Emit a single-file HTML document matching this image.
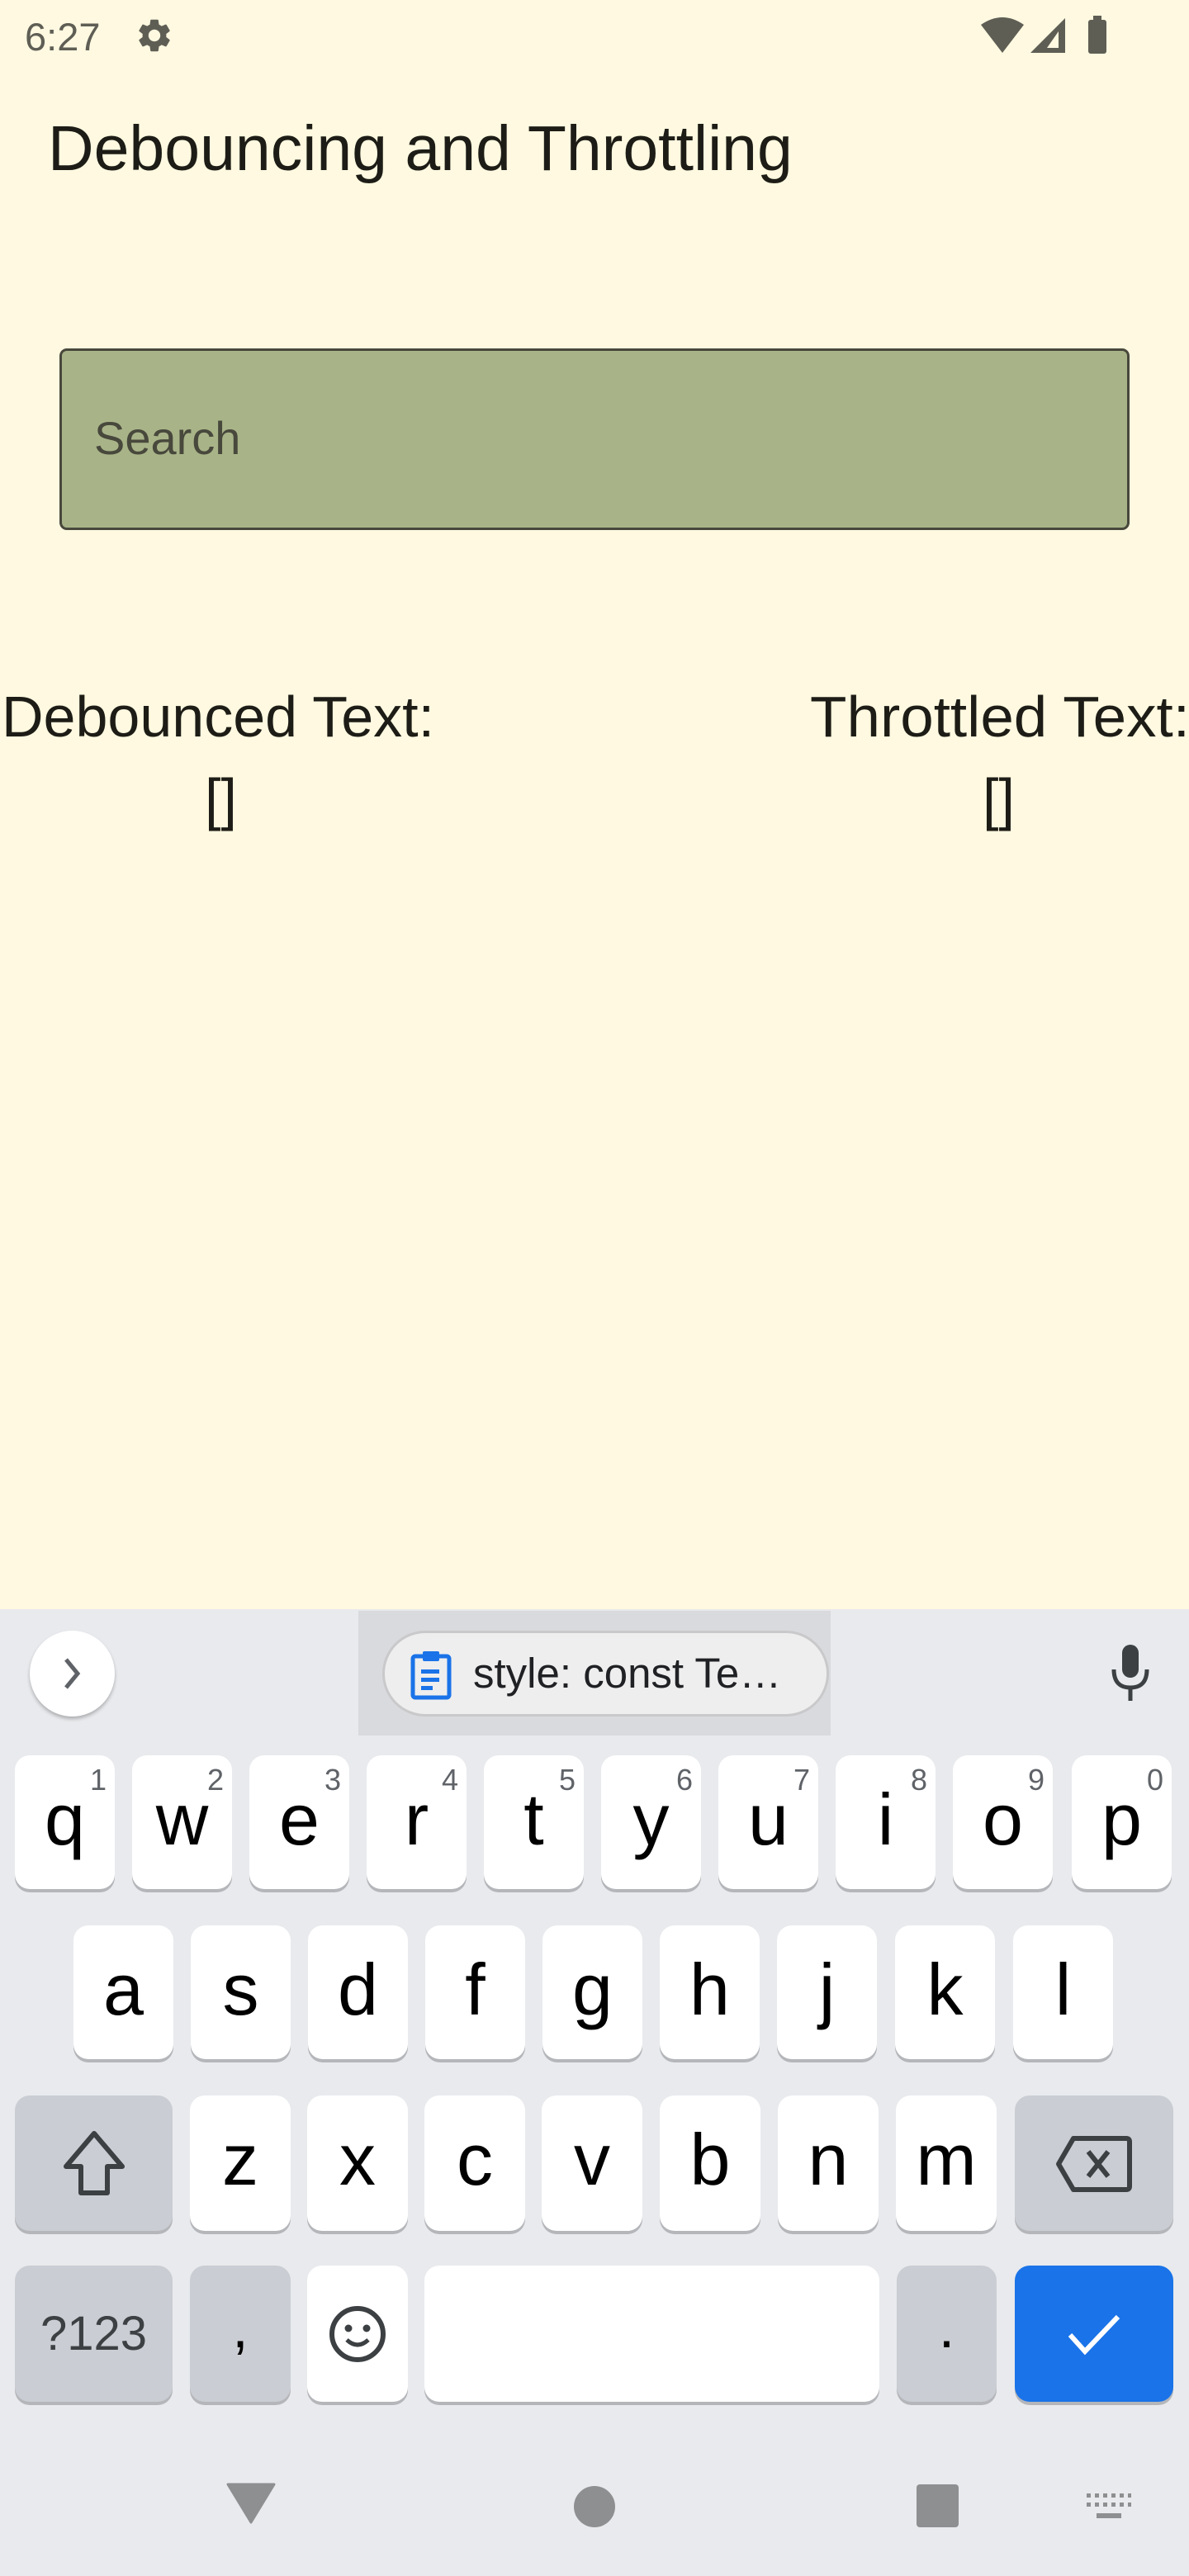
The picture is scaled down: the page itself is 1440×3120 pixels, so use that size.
<!DOCTYPE html>
<html><head><meta charset="utf-8"><style>
*{margin:0;padding:0;box-sizing:border-box}
body{width:1440px;height:3120px;background:#fef9e0;font-family:"Liberation Sans",sans-serif;position:relative;overflow:hidden}
.abs{position:absolute}
.t{white-space:nowrap;transform-origin:0 0}
.kb{position:absolute;left:0;top:1949px;width:1440px;height:1171px;background:#e8eaed}
.key{position:absolute;background:#fff;border-radius:18px;box-shadow:0 4px 0 #b4b6ba;text-align:center;color:#000;font-size:88px;line-height:1}
.key.g{background:#cacdd3}
.key span.l{position:absolute;left:0;right:0;top:34px}
.key span.n{position:absolute;right:10px;top:12px;font-size:36px;color:#5f6368}
</style></head><body>
<!-- status bar -->
<div class="abs t" style="left:30px;top:17px;font-size:47px;color:#5f5e55">6:27</div>
<svg class="abs" style="left:163px;top:19px" width="48" height="48" viewBox="0 0 24 24"><path fill="#5f5e55" d="M19.14 12.94c.04-.3.06-.61.06-.94s-.02-.64-.07-.94l2.030-1.58a.49.49 0 0 0 .12-.61l-1.92-3.32a.488.488 0 0 0-.59-.22l-2.39.96c-.5-.38-1.03-.7-1.62-.94l-.36-2.54a.484.484 0 0 0-.48-.41h-3.84c-.24 0-.43.17-.47.41l-.36 2.54c-.59.24-1.130.57-1.62.94l-2.39-.96c-.22-.08-.47 0-.59.22L2.74 8.87c-.12.21-.08.47.12.61l2.03 1.58c-.05.3-.09.63-.09.94s.02.64.07.94l-2.03 1.58a.49.49 0 0 0-.12.61l1.92 3.32c.12.22.37.29.59.22l2.39-.96c.5.38 1.03.7 1.62.94l.36 2.54c.05.24.24.41.48.41h3.84c.24 0 .44-.17.47-.41l.36-2.54c.59-.24 1.13-.56 1.62-.94l2.39.96c.22.08.47 0 .59-.22l1.92-3.32c.12-.22.07-.47-.12-.61l-2.01-1.58zM12 15.6c-1.98 0-3.6-1.62-3.6-3.6s1.62-3.6 3.6-3.6 3.6 1.62 3.6 3.6-1.62 3.6-3.6 3.6z"/></svg>
<svg class="abs" style="left:1186px;top:20px" width="56" height="46" viewBox="0 0 56 46"><path fill="#5f5e55" d="M2 10 Q28 -8 54 10 L28 44 Z"/></svg>
<svg class="abs" style="left:1246px;top:20px" width="46" height="46" viewBox="0 0 46 46"><path fill="#5f5e55" d="M44 2 V44 H2 Z"/><path fill="#fef9e0" d="M36 18 V38 H22 Z"/></svg>
<div class="abs" style="left:1318px;top:24px;width:22px;height:41px;background:#5f5e55;border-radius:3px"></div>
<div class="abs" style="left:1324px;top:19px;width:10px;height:6px;background:#5f5e55"></div>

<!-- title -->
<div class="abs t" style="left:58px;top:136px;font-size:77px;color:#1d1c16">Debouncing and Throttling</div>

<!-- search field -->
<div class="abs" style="left:72px;top:422px;width:1296px;height:220px;background:#a8b488;border:3px solid #48483c;border-radius:9px"></div>
<div class="abs t" style="left:114px;top:498px;font-size:56px;color:#48483c">Search</div>

<!-- columns -->
<div class="abs t" style="left:2px;top:828px;font-size:70px;color:#1d1c16">Debounced Text:</div>
<div class="abs t" style="left:248px;top:928px;font-size:70px;color:#1d1c16">[]</div>
<div class="abs t" style="left:981px;top:828px;font-size:70px;color:#1d1c16;transform:scaleX(1.04)">Throttled Text:</div>
<div class="abs t" style="left:1190px;top:928px;font-size:70px;color:#1d1c16">[]</div>

<!-- keyboard -->
<div class="kb"></div>
<div class="abs" style="left:434px;top:1951px;width:572px;height:151px;background:#d9dadd"></div>
<div class="abs" style="left:36px;top:1975px;width:103px;height:104px;background:#fff;border-radius:50%;box-shadow:0 3px 4px rgba(0,0,0,.25)"></div>
<svg class="abs" style="left:68px;top:2006px" width="40" height="42" viewBox="0 0 40 42"><path d="M12 4 L26 21 L12 38" fill="none" stroke="#5f6368" stroke-width="5"/></svg>
<div class="abs" style="left:463px;top:1975px;width:541px;height:104px;background:#eeeeee;border:3px solid #c9c9cb;border-radius:52px"></div>
<svg class="abs" style="left:496px;top:1996px" width="54" height="64" viewBox="0 0 54 64"><rect x="4" y="10" width="44" height="50" rx="3" fill="none" stroke="#1a73e8" stroke-width="5"/><rect x="16" y="4" width="20" height="12" rx="2" fill="#1a73e8"/><rect x="14" y="26" width="22" height="5" fill="#1a73e8"/><rect x="14" y="36" width="22" height="5" fill="#1a73e8"/><rect x="14" y="46" width="14" height="5" fill="#1a73e8"/></svg>
<div class="abs t" style="left:573px;top:1997px;font-size:51px;color:#202124">style: const Te…</div>
<svg class="abs" style="left:1342px;top:1990px" width="54" height="72" viewBox="0 0 54 72"><rect x="17" y="2" width="20" height="40" rx="10" fill="#3c4043"/><path d="M7 32 Q7 54 27 54 Q47 54 47 32" fill="none" stroke="#3c4043" stroke-width="5"/><rect x="24.5" y="52" width="5" height="18" fill="#3c4043"/></svg>

<!-- row1 -->
<div class="key" style="left:18px;top:2126px;width:121px;height:162px"><span class="n">1</span><span class="l">q</span></div>
<div class="key" style="left:160px;top:2126px;width:121px;height:162px"><span class="n">2</span><span class="l">w</span></div>
<div class="key" style="left:302px;top:2126px;width:121px;height:162px"><span class="n">3</span><span class="l">e</span></div>
<div class="key" style="left:444px;top:2126px;width:121px;height:162px"><span class="n">4</span><span class="l">r</span></div>
<div class="key" style="left:586px;top:2126px;width:121px;height:162px"><span class="n">5</span><span class="l">t</span></div>
<div class="key" style="left:728px;top:2126px;width:121px;height:162px"><span class="n">6</span><span class="l">y</span></div>
<div class="key" style="left:870px;top:2126px;width:121px;height:162px"><span class="n">7</span><span class="l">u</span></div>
<div class="key" style="left:1012px;top:2126px;width:121px;height:162px"><span class="n">8</span><span class="l">i</span></div>
<div class="key" style="left:1154px;top:2126px;width:121px;height:162px"><span class="n">9</span><span class="l">o</span></div>
<div class="key" style="left:1298px;top:2126px;width:121px;height:162px"><span class="n">0</span><span class="l">p</span></div>
<!-- row2 -->
<div class="key" style="left:89px;top:2332px;width:121px;height:162px"><span class="l">a</span></div>
<div class="key" style="left:231px;top:2332px;width:121px;height:162px"><span class="l">s</span></div>
<div class="key" style="left:373px;top:2332px;width:121px;height:162px"><span class="l">d</span></div>
<div class="key" style="left:515px;top:2332px;width:121px;height:162px"><span class="l">f</span></div>
<div class="key" style="left:657px;top:2332px;width:121px;height:162px"><span class="l">g</span></div>
<div class="key" style="left:799px;top:2332px;width:121px;height:162px"><span class="l">h</span></div>
<div class="key" style="left:941px;top:2332px;width:121px;height:162px"><span class="l">j</span></div>
<div class="key" style="left:1084px;top:2332px;width:121px;height:162px"><span class="l">k</span></div>
<div class="key" style="left:1227px;top:2332px;width:121px;height:162px"><span class="l">l</span></div>
<!-- row3 -->
<div class="key g" style="left:18px;top:2538px;width:191px;height:164px"></div>
<svg class="abs" style="left:72px;top:2578px" width="84" height="84" viewBox="0 0 84 84"><path d="M42 6 L76 46 H58 V78 H26 V46 H8 Z" fill="none" stroke="#3c4043" stroke-width="6" stroke-linejoin="round"/></svg>
<div class="key" style="left:230px;top:2538px;width:122px;height:164px"><span class="l">z</span></div>
<div class="key" style="left:372px;top:2538px;width:122px;height:164px"><span class="l">x</span></div>
<div class="key" style="left:514px;top:2538px;width:122px;height:164px"><span class="l">c</span></div>
<div class="key" style="left:656px;top:2538px;width:122px;height:164px"><span class="l">v</span></div>
<div class="key" style="left:799px;top:2538px;width:122px;height:164px"><span class="l">b</span></div>
<div class="key" style="left:942px;top:2538px;width:122px;height:164px"><span class="l">n</span></div>
<div class="key" style="left:1085px;top:2538px;width:122px;height:164px"><span class="l">m</span></div>
<div class="key g" style="left:1229px;top:2538px;width:192px;height:164px"></div>
<svg class="abs" style="left:1278px;top:2586px" width="94" height="70" viewBox="0 0 94 70"><path d="M22 4 H86 Q90 4 90 8 V62 Q90 66 86 66 H22 L4 35 Z" fill="none" stroke="#3c4043" stroke-width="6" stroke-linejoin="round"/><path d="M40 20 L64 50 M64 20 L40 50" stroke="#3c4043" stroke-width="6"/></svg>
<!-- row4 -->
<div class="key g" style="left:18px;top:2744px;width:191px;height:165px;font-size:58px;color:#3c4043"><span class="l" style="top:54px">?123</span></div>
<div class="key g" style="left:230px;top:2744px;width:122px;height:165px"><span class="l" style="top:40px;font-size:70px">,</span></div>
<div class="key" style="left:372px;top:2744px;width:122px;height:165px"></div>
<svg class="abs" style="left:396px;top:2790px" width="74" height="74" viewBox="0 0 74 74"><circle cx="37" cy="37" r="31" fill="none" stroke="#3c4043" stroke-width="6"/><circle cx="26" cy="30" r="4.5" fill="#3c4043"/><circle cx="48" cy="30" r="4.5" fill="#3c4043"/><path d="M24 44 Q37 56 50 44" fill="none" stroke="#3c4043" stroke-width="5"/></svg>
<div class="key" style="left:514px;top:2744px;width:551px;height:165px"></div>
<div class="key g" style="left:1086px;top:2744px;width:121px;height:165px"><span class="l" style="top:40px;font-size:70px">.</span></div>
<div class="key" style="left:1229px;top:2744px;width:192px;height:165px;background:#1a73e8"></div>
<svg class="abs" style="left:1290px;top:2800px" width="70" height="56" viewBox="0 0 70 56"><path d="M6 28 L24 48 L64 6" fill="none" stroke="#fff" stroke-width="6"/></svg>
<!-- nav -->
<svg class="abs" style="left:274px;top:3007px" width="60" height="50" viewBox="0 0 60 50"><path d="M2 2 H58 L30 48 Z" fill="#8e8f91" stroke="#8e8f91" stroke-width="3" stroke-linejoin="round"/></svg>
<div class="abs" style="left:695px;top:3011px;width:50px;height:50px;border-radius:50%;background:#8e8f91"></div>
<div class="abs" style="left:1110px;top:3009px;width:51px;height:52px;border-radius:4px;background:#8e8f91"></div>
<svg class="abs" style="left:1316px;top:3020px" width="54" height="34" viewBox="0 0 54 34"><g fill="#8e8f91"><rect x="0" y="0" width="5" height="5"/><rect x="10" y="0" width="5" height="5"/><rect x="20" y="0" width="5" height="5"/><rect x="30" y="0" width="5" height="5"/><rect x="40" y="0" width="5" height="5"/><rect x="50" y="0" width="4" height="5"/><rect x="0" y="11" width="5" height="5"/><rect x="10" y="11" width="5" height="5"/><rect x="20" y="11" width="5" height="5"/><rect x="30" y="11" width="5" height="5"/><rect x="40" y="11" width="5" height="5"/><rect x="50" y="11" width="4" height="5"/><rect x="12" y="24" width="30" height="6"/></g></svg>
</body></html>
